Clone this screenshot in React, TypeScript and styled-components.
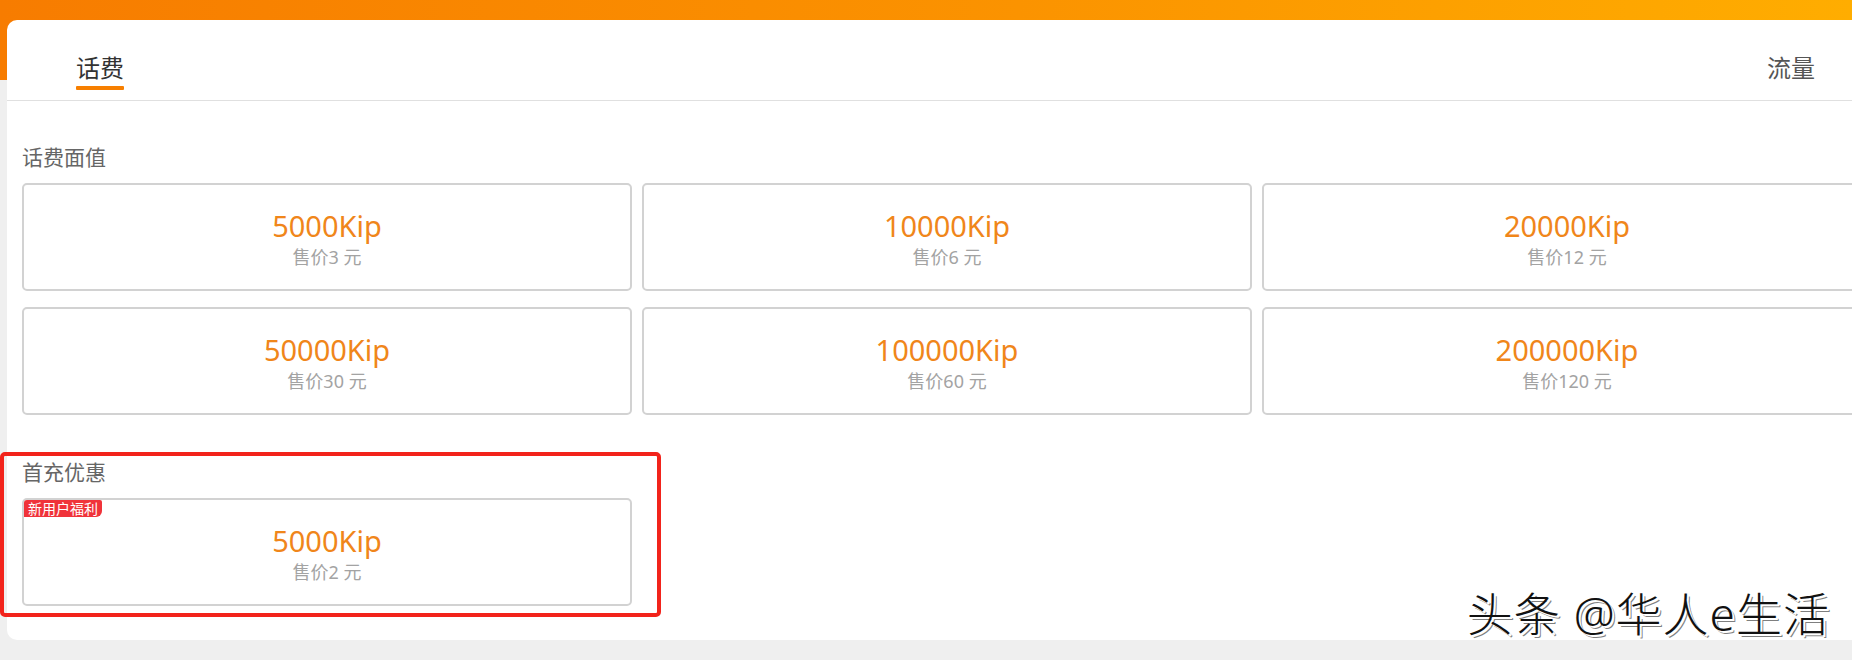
import styled, { createGlobalStyle } from "styled-components"

const GlobalStyle = createGlobalStyle`
    html, body {
        margin: 0;
        padding: 0;
        overflow: hidden;
    }
    body {
        font-family: "Noto Sans", "Noto Sans CJK SC", sans-serif;
    }
`

const StyledPage = styled.div`
    position: relative;
    height: 660px;
    overflow: hidden;
    box-sizing: border-box;
    padding: 20px 0 0 7px;
    background:
        linear-gradient(90deg, #f77c00 0%, #fb9300 55%, #ffad00 100%) top left / 100% 80px no-repeat,
        #efefef;
`

const StyledPanel = styled.div`
    width: 1880px;
    height: 620px;
    background: #fff;
    border-radius: 10px;
`

const StyledTabBar = styled.div`
    display: flex;
    justify-content: space-between;
    align-items: flex-start;
    height: 81px;
    box-sizing: border-box;
    padding: 32px 72px 0 69px;
    border-bottom: 1px solid #e0e0e0;
`

const StyledTab = styled.div<{ $active?: boolean }>`
    display: flex;
    flex-direction: column;
    font-size: 24px;
    line-height: 32px;
    color: ${p => (p.$active ? "#333" : "#555")};

    &::after {
        content: "";
        height: 4px;
        margin-top: 2px;
        border-radius: 1px;
        background: ${p => (p.$active ? "#f77f00" : "transparent")};
    }
`

const StyledContent = styled.div`
    padding: 42px 15px 0;
`

const StyledSection = styled.section`
    position: relative;

    & + & {
        margin-top: 43px;
    }
`

const StyledLabel = styled.div`
    font-size: 21px;
    line-height: 28px;
    color: #666;
    margin-bottom: 12px;
`

const StyledGrid = styled.div`
    display: grid;
    grid-template-columns: repeat(3, 610px);
    column-gap: 10px;
    row-gap: 16px;
`

const StyledCard = styled.div`
    position: relative;
    height: 108px;
    box-sizing: border-box;
    border: 2px solid #d2d2d2;
    border-radius: 5px;
    display: flex;
    flex-direction: column;
    align-items: center;
    justify-content: center;
    gap: 3px;
`

const StyledAmount = styled.div`
    font-size: 29px;
    line-height: 36px;
    color: #f0861a;
`

const StyledPrice = styled.div`
    font-size: 18px;
    line-height: 20px;
    color: #a3a3a3;
`

const StyledBadge = styled.span`
    position: absolute;
    top: 0;
    left: 0;
    padding: 0 4px;
    font-size: 14px;
    line-height: 17px;
    color: #fff;
    background: #f0333a;
    border-radius: 3px 2px 6px 0;
`

const StyledHighlight = styled.div`
    position: absolute;
    left: -22px;
    top: -6px;
    width: 661px;
    height: 165px;
    box-sizing: border-box;
    border: 4px solid #f2231b;
    border-radius: 5px;
    pointer-events: none;
`

const StyledWatermark = styled.div`
    position: absolute;
    right: 22px;
    top: 588px;
    font-size: 46px;
    line-height: 50px;
    font-weight: 300;
    color: #111;
    letter-spacing: 1px;
    text-shadow: 2px 2px 0 #fff, 3px 3px 0 rgba(0, 0, 0, 0.5);
    white-space: nowrap;
`

const faceValues = [
    { amount: "5000Kip", price: "3" },
    { amount: "10000Kip", price: "6" },
    { amount: "20000Kip", price: "12" },
    { amount: "50000Kip", price: "30" },
    { amount: "100000Kip", price: "60" },
    { amount: "200000Kip", price: "120" },
]

function App() {
    return (
        <>
            <GlobalStyle />
            <StyledPage>
                <StyledPanel>
                    <StyledTabBar>
                        <StyledTab $active>话费</StyledTab>
                        <StyledTab>流量</StyledTab>
                    </StyledTabBar>
                    <StyledContent>
                        <StyledSection>
                            <StyledLabel>话费面值</StyledLabel>
                            <StyledGrid>
                                {faceValues.map(item => (
                                    <StyledCard key={item.amount}>
                                        <StyledAmount>{item.amount}</StyledAmount>
                                        <StyledPrice>售价{item.price} 元</StyledPrice>
                                    </StyledCard>
                                ))}
                            </StyledGrid>
                        </StyledSection>
                        <StyledSection>
                            <StyledHighlight />
                            <StyledLabel>首充优惠</StyledLabel>
                            <StyledGrid>
                                <StyledCard>
                                    <StyledBadge>新用户福利</StyledBadge>
                                    <StyledAmount>5000Kip</StyledAmount>
                                    <StyledPrice>售价2 元</StyledPrice>
                                </StyledCard>
                            </StyledGrid>
                        </StyledSection>
                    </StyledContent>
                </StyledPanel>
                <StyledWatermark>头条 @华人e生活</StyledWatermark>
            </StyledPage>
        </>
    )
}

export default App
